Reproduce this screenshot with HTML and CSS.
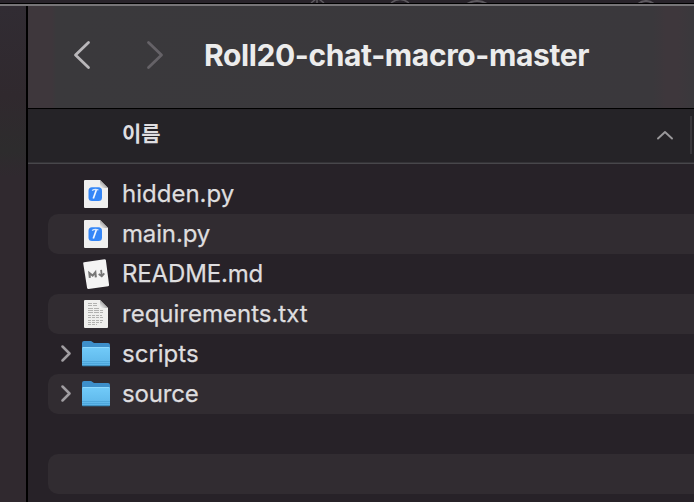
FILE: index.html
```
<!DOCTYPE html>
<html lang="ko">
<head>
<meta charset="utf-8">
<title>Roll20-chat-macro-master</title>
<link rel="stylesheet" href="styles.css">
</head>
<body>
<svg width="0" height="0" class="defs" aria-hidden="true">
  <defs>
    <linearGradient id="fold" x1="0" y1="1" x2="1" y2="0"><stop offset="0" stop-color="#fff"/><stop offset="0.5" stop-color="#aaa"/></linearGradient>
    <linearGradient id="folder" x1="0" y1="0" x2="0" y2="1"><stop offset="0" stop-color="#72cbf9"/><stop offset="1" stop-color="#5cb5e8"/></linearGradient>
    <symbol id="script" viewBox="0 0 28 32">
      <path d="M3 2h15l8 8v19q0 1-1 1H3q-1 0-1-1V3q0-1 1-1z" fill="#f0f0f0"/>
      <path d="M18 2l8 8h-7q-1 0-1-1z" fill="url(#fold)"/>
      <rect x="6.500" y="9.300" width="13.500" height="13.700" rx="3.500" fill="#3486f7"/>
      <path d="M10 12.500q3-1.800 6.500-.5" fill="none" stroke="#d5e6ff" stroke-width="1.300"/>
      <path d="M14.300 12l-3 8.500" fill="none" stroke="#f2f8ff" stroke-width="1.700"/>
    </symbol>
    <symbol id="markdown" viewBox="0 0 28 32">
      <path d="M2 4.200L22.500 1.200q1.200 0 1.400 1L27.100 27q0 1-1 1.200L6.500 31q-1.200 0-1.400-1L1.200 5.200q0-.9.800-1z" fill="#f4f4f4"/>
      <g transform="rotate(-6 14 16)" fill="none" stroke="#777"><path d="M7.500 19.300v-5l3 2.900 3-2.900v5" stroke-width="2.100"/><path d="M19.500 12.500v6M16.700 16.200l2.800 2.600 2.800-2.600" stroke-width="1.800"/></g>
    </symbol>
    <symbol id="text" viewBox="0 0 28 32">
      <path d="M3 2h15l8 8v19q0 1-1 1H3q-1 0-1-1V3q0-1 1-1z" fill="#efefed"/>
      <path d="M18 2l8 8h-7q-1 0-1-1z" fill="url(#fold)"/>
      <g stroke="#b2b2b0" fill="none"><path d="M6 5.500h10M6 7.500h9" stroke-dasharray="4 1"/><path d="M6 10.500h11M6 12.500h15M6 14.500h15" stroke-dasharray="5 1"/><path d="M6 17.500h14M6 19.500h15M6 22.500h15M6 24.500h14M6 26.500h9" stroke-dasharray="3 1"/></g>
    </symbol>
    <symbol id="dir" viewBox="0 0 28 28">
      <path d="M0 3q0-2 2-2h6.500q1 0 2 1l1.500 1H26q2 0 2 2v20H0z" fill="#3d8fca"/>
      <path d="M0 8q0-1 1-1h26q1 0 1 1v17q0 1-1 1H1q-1 0-1-1z" fill="url(#folder)"/>
      <path d="M1 7.500h26" stroke="#8edaff"/>
      <path d="M0 21.500h28M0 23.500h28" stroke="#469fd5" opacity=".65"/>
      <path d="M.5 25.800h27" stroke="#327fae"/>
    </symbol>
    <symbol id="disclose" viewBox="0 0 12 18"><path d="M2.500 1.500l7 7-7 7" fill="none" stroke="#a09da1" stroke-width="2.500" stroke-linecap="round" stroke-linejoin="round"/></symbol>
  </defs>
</svg>
<div class="backdrop">
  <svg width="694" height="3" fill="none" stroke="#5d595f" stroke-width="1.500">
    <path d="M311 3l5-4M317 4V0M324 3l-5-4M391 3q9-7 18 0"/>
    <path d="M467 4q10-6 20 0M638 4q8-6 16 0" stroke-width="2"/>
  </svg>
</div>
<div class="window">
  <aside class="sidebar"></aside>
  <main class="browser">
    <header class="toolbar">
      <svg class="nav" width="20" height="32" viewBox="0 0 20 32"><path d="M16.500 3.500L3.500 16l13 12.500" stroke="#b9b7ba"/></svg>
      <svg class="nav forward" width="20" height="32" viewBox="0 0 20 32"><path d="M3.500 3.500L16.500 16l-13 12.500" stroke="#656267"/></svg>
      <h1>Roll20-chat-macro-master</h1>
    </header>
    <div class="columns">
      <span class="column-name">이름</span>
      <svg class="sort" width="18" height="12" viewBox="0 0 18 12"><path d="M2 9.500L9 3l7 6.500" fill="none" stroke="#9a989b" stroke-width="1.900" stroke-linecap="round" stroke-linejoin="round"/></svg>
      <span class="divider"></span>
    </div>
    <div class="list">
      <div class="row"><span class="arrow"></span><svg class="icon"><use href="#script"/></svg><span class="name">hidden.py</span></div>
      <div class="row"><span class="arrow"></span><svg class="icon"><use href="#script"/></svg><span class="name tight">main.py</span></div>
      <div class="row"><span class="arrow"></span><svg class="icon"><use href="#markdown"/></svg><span class="name tight">README.md</span></div>
      <div class="row"><span class="arrow"></span><svg class="icon"><use href="#text"/></svg><span class="name">requirements.txt</span></div>
      <div class="row"><svg class="arrow"><use href="#disclose"/></svg><svg class="icon folder"><use href="#dir"/></svg><span class="name">scripts</span></div>
      <div class="row"><svg class="arrow"><use href="#disclose"/></svg><svg class="icon folder"><use href="#dir"/></svg><span class="name tight">source</span></div>
      <div class="row"></div>
      <div class="row"></div>
    </div>
  </main>
</div>
</body>
</html>
```
FILE: styles.css
```
* { box-sizing: border-box; }
body {
  margin: 0;
  width: 694px;
  height: 502px;
  overflow: hidden;
  background: #272228;
  font-family: Inter, "Noto Sans CJK KR", sans-serif;
}
svg { display: block; flex: none; }
.defs { position: absolute; }
.backdrop { height: 4px; background: #29242b; border-bottom: 1px solid #000; }
.window { display: flex; height: 498px; border-top: 2px solid #777578; }
.sidebar {
  width: 28px;
  flex: none;
  border-right: 2px solid #000;
  background: linear-gradient(#312c33 0, #30292e 90px, #2d2c2d 145px, #30292f 170px, #30292f 100%);
}
.browser { flex: 1; min-width: 0; }
.toolbar {
  display: flex;
  align-items: center;
  height: 103px;
  padding: 0 0 4px 44px;
  border-bottom: 1px solid #000;
  background: linear-gradient(90deg, #3e373c 0, #3e373c 24px, #3a393c 28px, #3a383c 625px, #3e373c 638px, #3e373c 650px, #3a383c 664px);
}
.nav { fill: none; stroke-width: 2.800; stroke-linecap: round; stroke-linejoin: round; }
.forward { margin-left: 53px; }
h1 {
  margin: 0 0 0 39px;
  color: #ececec;
  font-size: 30px;
  line-height: 40px;
  font-weight: 700;
  letter-spacing: -0.380px;
  white-space: nowrap;
}
.columns {
  display: flex;
  align-items: center;
  height: 55px;
  padding: 0 2px 3px 94px;
  background: #252327;
  border-bottom: 1px solid #48474b;
  box-shadow: inset 0 -1px #343337;
}
.column-name { padding-bottom: 2px; color: #dfdee0; font-size: 21px; line-height: 32px; font-weight: 700; }
.sort { margin-left: auto; }
.divider { width: 2px; height: 38px; margin-left: 16px; background: #39373b; }
.list { padding: 10px 0 0 20px; }
.row { display: flex; align-items: center; height: 40px; border-radius: 10px 0 0 10px; }
.row:nth-child(even) { background: #312c31; }
.arrow { width: 12px; height: 18px; margin-left: 12px; flex: none; }
.icon { width: 28px; height: 32px; margin-left: 10px; }
.icon.folder { height: 28px; }
.name {
  margin-left: 12px;
  color: #dedddf;
  font-size: 24px;
  line-height: 32px;
  white-space: nowrap;
  -webkit-text-stroke: 0.250px #dedddf;
}
.tight { letter-spacing: -0.150px; }
```
